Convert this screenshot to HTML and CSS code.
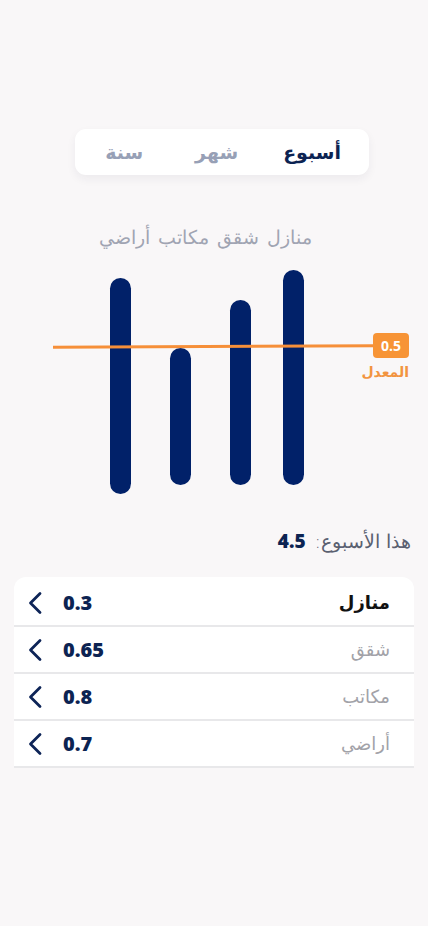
FILE: index.html
```html
<!DOCTYPE html>
<html lang="ar" dir="rtl">
<head>
<meta charset="utf-8">
<link rel="stylesheet" href="styles.css">
</head>
<body>
<div class="page">
  <div class="segment">
    <span class="seg active">أسبوع</span>
    <span class="seg">شهر</span>
    <span class="seg">سنة</span>
  </div>

  <div class="cats">منازل شقق مكاتب أراضي</div>

  <div class="chart">
    <div class="bars">
      <div class="bar b1"></div>
      <div class="bar b2"></div>
      <div class="bar b3"></div>
      <div class="bar b4"></div>
    </div>
    <div class="avg-line"></div>
    <div class="avg-badge">0.5</div>
    <div class="avg-label">المعدل</div>
  </div>

  <div class="total"><span class="total-label">هذا الأسبوع:</span><span class="total-value">4.5</span></div>

  <div class="list">
    <div class="row">
      <span class="name first">منازل</span>
      <span class="val">0.3</span>
      <svg class="chev" viewBox="0 0 16 24" width="16" height="24"><path d="M13 2.5 L3.5 12 L13 21.5" fill="none" stroke="#0d2457" stroke-width="2.8" stroke-linecap="round" stroke-linejoin="round"/></svg>
    </div>
    <div class="row">
      <span class="name">شقق</span>
      <span class="val">0.65</span>
      <svg class="chev" viewBox="0 0 16 24" width="16" height="24"><path d="M13 2.5 L3.5 12 L13 21.5" fill="none" stroke="#0d2457" stroke-width="2.8" stroke-linecap="round" stroke-linejoin="round"/></svg>
    </div>
    <div class="row">
      <span class="name">مكاتب</span>
      <span class="val">0.8</span>
      <svg class="chev" viewBox="0 0 16 24" width="16" height="24"><path d="M13 2.5 L3.5 12 L13 21.5" fill="none" stroke="#0d2457" stroke-width="2.8" stroke-linecap="round" stroke-linejoin="round"/></svg>
    </div>
    <div class="row">
      <span class="name">أراضي</span>
      <span class="val">0.7</span>
      <svg class="chev" viewBox="0 0 16 24" width="16" height="24"><path d="M13 2.5 L3.5 12 L13 21.5" fill="none" stroke="#0d2457" stroke-width="2.8" stroke-linecap="round" stroke-linejoin="round"/></svg>
    </div>
  </div>
</div>
</body>
</html>
```
FILE: styles.css
```css
html, body {
  margin: 0;
  padding: 0;
}
body {
  background: #f9f7f8;
  font-family: "DejaVu Sans", "Noto Sans", sans-serif;
  width: 428px;
  height: 926px;
  overflow: hidden;
}
.page {
  display: flex;
  flex-direction: column;
  padding-top: 129px;
}
.segment {
  align-self: center;
  margin-left: 16px;
  width: 294px;
  height: 46px;
  background: #ffffff;
  border-radius: 11px;
  box-shadow: 0 4px 10px rgba(40, 40, 60, 0.06);
  display: flex;
  align-items: center;
  box-sizing: border-box;
  padding: 0 28px 0 0;
}
.seg {
  font-size: 19px;
  font-weight: bold;
  color: #97a0b6;
  line-height: 46px;
}
.seg.active {
  color: #0c2352;
  margin-left: 45px;
}
.seg:nth-child(2) {
  margin-left: 52px;
}
.cats {
  margin-top: 50px;
  padding-right: 116px;
  font-size: 19px;
  font-weight: 200;
  color: #a0a4b2;
  line-height: 24px;
  height: 24px;
  word-spacing: 2px;
}
.chart {
  position: relative;
  height: 231px;
  margin-top: 21px;
}
.bars {
  direction: ltr;
  display: flex;
  align-items: flex-start;
  padding-left: 110px;
}
.bar {
  width: 21px;
  border-radius: 11px;
  background: #012169;
}
.b1 { margin-top: 8px; height: 216px; }
.b2 { margin-top: 78px; height: 137px; margin-left: 39px; }
.b3 { margin-top: 30px; height: 185px; margin-left: 39px; }
.b4 { margin-top: 0; height: 215px; margin-left: 32px; }
.avg-line {
  position: absolute;
  left: 53px;
  top: 75px;
  width: 322px;
  height: 3px;
  background: #f68f39;
  transform: rotate(-0.25deg);
}
.avg-badge {
  position: absolute;
  left: 373px;
  top: 63px;
  width: 36px;
  height: 25px;
  border-radius: 4px;
  background: #f79436;
  color: #ffffff;
  font-family: "Open Sans", sans-serif;
  font-weight: bold;
  font-size: 14px;
  line-height: 25px;
  text-align: center;
}
.avg-label {
  position: absolute;
  right: 19px;
  top: 94px;
  font-size: 14px;
  font-weight: bold;
  color: #f29440;
}
.total {
  margin-top: 27px;
  padding-right: 17px;
  display: flex;
  align-items: baseline;
  gap: 9px;
  height: 24px;
}
.total-label {
  font-size: 19px;
  font-weight: 200;
  color: #5a6070;
}
.total-value {
  font-family: "Open Sans", sans-serif;
  font-size: 19px;
  font-weight: 800;
  color: #0c2352;
}
.list {
  margin: 25px 14px 0 14px;
  padding-top: 3px;
  background: #ffffff;
  border-radius: 12px 12px 0 0;
}
.row {
  display: flex;
  align-items: center;
  height: 45px;
  border-bottom: 2px solid #e8e8ea;
  padding: 0 24px 0 13px;
}
.name {
  font-size: 18px;
  color: #a2a2a8;
  flex: 1;
}
.name.first {
  color: #111111;
  font-weight: bold;
}
.val {
  font-family: "Open Sans", sans-serif;
  font-size: 20px;
  font-weight: 800;
  color: #0c2352;
  margin-left: 20px;
  direction: ltr;
}
.chev {
  display: block;
}
```
